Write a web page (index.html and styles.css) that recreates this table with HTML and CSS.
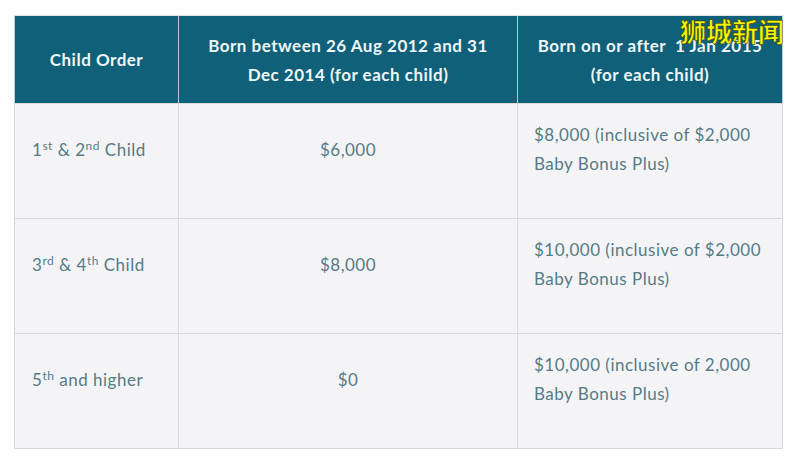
FILE: index.html
```html
<!DOCTYPE html>
<html>
<head>
<meta charset="utf-8">
<link rel="stylesheet" href="styles.css">
</head>
<body>
<div class="page">
  <table class="bonus">
    <colgroup>
      <col class="c1"><col class="c2"><col class="c3">
    </colgroup>
    <thead>
      <tr>
        <th>Child Order</th>
        <th>Born between 26 Aug 2012 and 31<br>Dec 2014 (for each child)</th>
        <th>Born on or after &nbsp;1 Jan 2015<br>(for each child)</th>
      </tr>
    </thead>
    <tbody>
      <tr>
        <td class="order"><p>1<sup>st</sup> &amp; 2<sup>nd</sup> Child</p></td>
        <td class="amt"><p>$6,000</p></td>
        <td class="note"><p>$8,000 (inclusive of $2,000<br>Baby Bonus Plus)</p></td>
      </tr>
      <tr>
        <td class="order"><p>3<sup>rd</sup> &amp; 4<sup>th</sup> Child</p></td>
        <td class="amt"><p>$8,000</p></td>
        <td class="note"><p>$10,000 (inclusive of $2,000<br>Baby Bonus Plus)</p></td>
      </tr>
      <tr>
        <td class="order"><p>5<sup>th</sup> and higher</p></td>
        <td class="amt"><p>$0</p></td>
        <td class="note"><p>$10,000 (inclusive of 2,000<br>Baby Bonus Plus)</p></td>
      </tr>
    </tbody>
  </table>
  <div class="watermark">狮城新闻</div>
</div>
</body>
</html>
```
FILE: styles.css
```css
html, body {
  margin: 0;
  padding: 0;
  background: #ffffff;
}
.page {
  position: relative;
  width: 800px;
  height: 464px;
  padding: 15px 0 0 14px;
  box-sizing: border-box;
}
.bonus {
  border-collapse: collapse;
  table-layout: fixed;
  width: 768px;
  font-family: Lato, "Open Sans", sans-serif;
  font-size: 17px;
  letter-spacing: 0.5px;
  line-height: 29px;
}
.c1 { width: 164px; }
.c2 { width: 339px; }
.c3 { width: 265px; }
.bonus thead th {
  background: #10607a;
  color: #eef6f7;
  font-weight: 700;
  height: 88px;
  padding: 0 8px;
  text-align: center;
  vertical-align: middle;
  border-left: 1px solid #b9cfd8;
  border-right: 1px solid #b9cfd8;
  border-top: 1px solid #dfe6ea;
  box-sizing: border-box;
}
.bonus tbody td {
  background: #f4f4f6;
  color: #567b86;
  height: 115px;
  padding: 0 16px;
  vertical-align: middle;
  border: 1px solid #d9d9dc;
  box-sizing: border-box;
}
.bonus td p {
  margin: 0 0 24px;
}
.bonus td.amt {
  text-align: center;
}
.bonus td.order {
  padding-left: 17px;
}
.bonus sup {
  font-size: 12px;
  line-height: 0;
  vertical-align: 6px;
}
.watermark {
  position: absolute;
  left: 680px;
  top: 13px;
  font-family: "Noto Sans CJK SC", sans-serif;
  font-weight: 700;
  font-size: 26px;
  line-height: 36px;
  color: #f7f500;
  -webkit-text-stroke: 0.5px #2a2a00;
  letter-spacing: 0;
}
```
